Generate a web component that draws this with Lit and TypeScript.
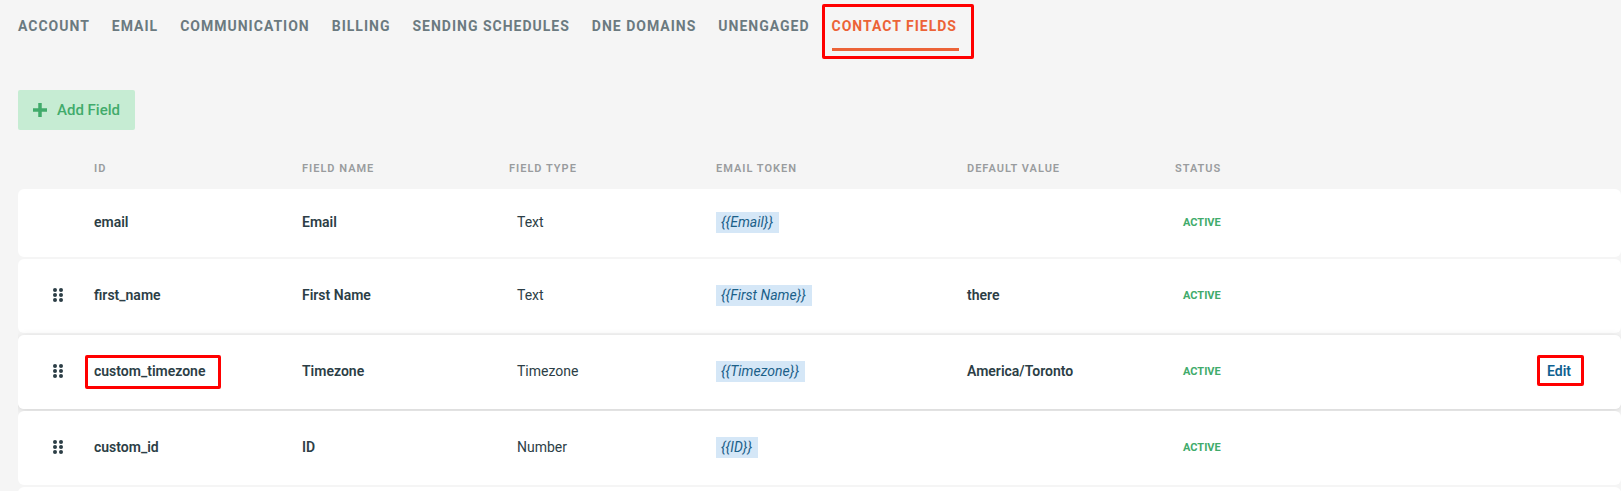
import { LitElement, html, css, nothing } from "lit";
import { customElement, state } from "lit/decorators.js";
import { classMap } from "lit/directives/class-map.js";

interface ContactField {
  id: string;
  name: string;
  type: string;
  defaultValue?: string;
  locked?: boolean;
}

const TABS = [
  "Account",
  "Email",
  "Communication",
  "Billing",
  "Sending Schedules",
  "DNE Domains",
  "Unengaged",
  "Contact Fields",
];

const FIELDS: ContactField[] = [
  { id: "email", name: "Email", type: "Text", locked: true },
  { id: "first_name", name: "First Name", type: "Text", defaultValue: "there" },
  { id: "custom_timezone", name: "Timezone", type: "Timezone", defaultValue: "America/Toronto" },
  { id: "custom_id", name: "ID", type: "Number" },
];

@customElement("settings-tabs")
export class SettingsTabs extends LitElement {
  @state() private active = "Contact Fields";

  static styles = css`
    :host {
      display: block;
    }
    .tabs {
      display: flex;
      gap: 20px;
      padding: 16px 18px 0;
    }
    .tab {
      position: relative;
      padding: 0 2px 12px 0;
      border-bottom: 3px solid transparent;
      color: #6b7a80;
      font-size: 14px;
      font-weight: 700;
      line-height: 20px;
      letter-spacing: 1px;
      text-decoration: none;
      text-transform: uppercase;
      white-space: nowrap;
    }
    .active {
      border-bottom-color: #ec6337;
      color: #ec6337;
    }
    .active::after {
      content: "";
      position: absolute;
      inset: -12px -15px -11px -10px;
      border: 3px solid #ff0000;
      border-radius: 2px;
    }
  `;

  render() {
    return html`<nav class="tabs" aria-label="Settings">
      ${TABS.map(
        (t) => html`<a
          href="#"
          class=${classMap({ tab: true, active: t === this.active })}
          aria-current=${t === this.active ? "page" : nothing}
          >${t}</a
        >`
      )}
    </nav>`;
  }
}

@customElement("fields-table")
export class FieldsTable extends LitElement {
  @state() private hovered = "custom_timezone";

  static styles = css`
    :host {
      display: block;
      overflow: hidden;
    }
    .table {
      width: 100%;
      table-layout: fixed;
      border-collapse: separate;
      border-spacing: 0 2px;
    }
    .c-handle {
      width: 76px;
    }
    .c-id {
      width: 208px;
    }
    .c-std {
      width: 207px;
    }
    .c-token {
      width: 251px;
    }
    .c-default {
      width: 208px;
    }
    th {
      height: 26px;
      padding: 0;
      color: #999c9e;
      font-size: 11px;
      font-weight: 600;
      line-height: 16px;
      letter-spacing: 1px;
      text-align: left;
      text-transform: uppercase;
      vertical-align: top;
    }
    .row {
      position: relative;
      height: 74px;
      border-radius: 6px;
    }
    .locked {
      height: 68px;
    }
    .hovered {
      box-shadow: 0 2px 8px rgba(0, 0, 0, 0.14);
    }
    td {
      padding: 0 0 2px;
      background: #fff;
      color: #2c3e46;
      font-size: 14px;
      line-height: 21px;
      vertical-align: middle;
    }
    td:first-child {
      border-radius: 6px 0 0 6px;
    }
    td:last-child {
      border-radius: 0 6px 6px 0;
      padding-right: 50px;
      text-align: right;
    }
    .strong {
      font-weight: 600;
    }
    .indent {
      padding-left: 8px;
    }
    .handle {
      display: block;
      margin-left: 35px;
      padding: 0;
      border: 0;
      background: none;
      color: #2c3e46;
      cursor: grab;
    }
    .handle svg {
      display: block;
    }
    .token {
      display: inline-block;
      padding: 0 6px 0 5px;
      background: #d5e7f7;
      color: #1b6089;
      font-style: italic;
    }
    .status {
      color: #41ab6b;
      font-size: 11px;
      font-weight: 700;
    }
    .edit {
      color: #0f6190;
      font-weight: 600;
      text-decoration: none;
    }
    .marked {
      position: relative;
    }
    .marked::after {
      content: "";
      position: absolute;
      inset: -8px -16px -10px -9px;
      border: 3px solid #ff0000;
      border-radius: 2px;
    }
    .edit.marked::after {
      inset: -8px -13px -7px -10px;
    }
  `;

  private renderRow(f: ContactField) {
    const hot = f.id === this.hovered;
    return html`<tr class=${classMap({ row: true, locked: !!f.locked, hovered: hot })}>
      <td>
        ${f.locked
          ? nothing
          : html`<button class="handle" aria-label="Reorder ${f.name}">
              <svg width="10" height="14" viewBox="0 0 10 14" fill="currentColor">
                <circle cx="2" cy="2" r="2" />
                <circle cx="8" cy="2" r="2" />
                <circle cx="2" cy="7" r="2" />
                <circle cx="8" cy="7" r="2" />
                <circle cx="2" cy="12" r="2" />
                <circle cx="8" cy="12" r="2" />
              </svg>
            </button>`}
      </td>
      <td class="strong"><span class=${classMap({ marked: hot })}>${f.id}</span></td>
      <td class="strong">${f.name}</td>
      <td class="indent">${f.type}</td>
      <td><span class="token">{{${f.name}}}</span></td>
      <td class="strong">${f.defaultValue ?? nothing}</td>
      <td class="indent"><span class="status">ACTIVE</span></td>
      <td>${hot ? html`<a class="edit marked" href="#">Edit</a>` : nothing}</td>
    </tr>`;
  }

  render() {
    return html`<table class="table">
      <colgroup>
        <col class="c-handle" />
        <col class="c-id" />
        <col class="c-std" />
        <col class="c-std" />
        <col class="c-token" />
        <col class="c-default" />
        <col class="c-std" />
        <col />
      </colgroup>
      <thead>
        <tr>
          <th></th>
          <th scope="col">ID</th>
          <th scope="col">Field Name</th>
          <th scope="col">Field Type</th>
          <th scope="col">Email Token</th>
          <th scope="col">Default Value</th>
          <th scope="col">Status</th>
          <th></th>
        </tr>
      </thead>
      <tbody>
        ${FIELDS.map((f) => this.renderRow(f))}
        <tr class="row">
          <td colspan="7"></td>
          <td></td>
        </tr>
      </tbody>
    </table>`;
  }
}

@customElement("app-root")
export class AppRoot extends LitElement {
  static styles = css`
    :host {
      display: block;
      height: 100vh;
      overflow: hidden;
      background: #f5f5f5;
      font-family: Roboto, "Liberation Sans", sans-serif;
    }
    .content {
      padding: 39px 0 0 18px;
    }
    .add {
      display: flex;
      align-items: center;
      gap: 10px;
      height: 40px;
      margin-bottom: 29px;
      padding: 0 15px;
      border: 0;
      border-radius: 2px;
      background: #c6ecd3;
      color: #41ab6b;
      font-family: inherit;
      font-size: 15px;
      font-weight: 500;
      line-height: 20px;
    }
  `;

  render() {
    return html`
      <settings-tabs></settings-tabs>
      <main class="content">
        <button class="add">
          <svg width="14" height="14" viewBox="0 0 14 14" aria-hidden="true">
            <path d="M7 0v14M0 7h14" fill="none" stroke="currentColor" stroke-width="3.5" />
          </svg>
          Add Field
        </button>
        <fields-table></fields-table>
      </main>
    `;
  }
}
